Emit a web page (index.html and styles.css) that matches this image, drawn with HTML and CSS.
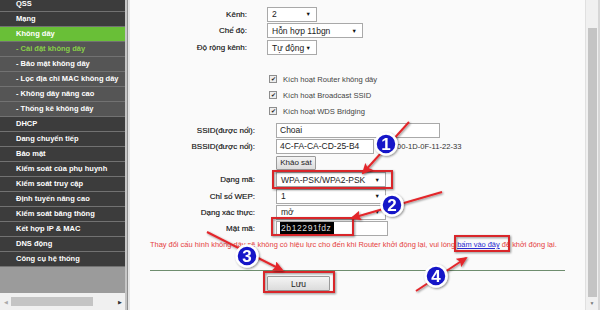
FILE: index.html
```html
<!DOCTYPE html>
<html lang="vi">
<head>
<meta charset="utf-8">
<title>Cài đặt không dây</title>
<link rel="stylesheet" href="styles.css">
</head>
<body>
<div class="page">
  <aside class="sidebar">
    <ul class="menu">
      <li>QSS</li>
      <li>Mạng</li>
      <li class="active">Không dây</li>
      <li class="sub current">- Cài đặt không dây</li>
      <li class="sub">- Bảo mật không dây</li>
      <li class="sub">- Lọc địa chỉ MAC không dây</li>
      <li class="sub">- Không dây nâng cao</li>
      <li class="sub">- Thống kê không dây</li>
      <li>DHCP</li>
      <li>Dang chuyển tiếp</li>
      <li>Bảo mật</li>
      <li>Kiểm soát của phụ huynh</li>
      <li>Kiểm soát truy cập</li>
      <li>Định tuyến nâng cao</li>
      <li>Kiểm soát băng thông</li>
      <li>Kết hợp IP &amp; MAC</li>
      <li>DNS động</li>
      <li>Công cụ hệ thống</li>
    </ul>
    <div class="side-fill"></div>
    <div class="hscroll">
      <span class="harrow left">◀</span>
      <span class="hthumb"></span>
      <span class="hspace"></span>
      <span class="harrow right">▶</span>
    </div>
  </aside>
  <div class="divider"></div>
  <main class="content">
    <div class="top">
      <div class="row"><span class="lab">Kênh:</span><div class="sel w50"><span>2</span><span class="arr">▼</span></div></div>
      <div class="row tall"><span class="lab">Chế độ:</span><div class="sel w96"><span>Hỗn hợp 11bgn</span><span class="arr">▼</span></div></div>
      <div class="row tall"><span class="lab">Độ rộng kênh:</span><div class="sel w50"><span>Tự động</span><span class="arr">▼</span></div></div>
    </div>
    <div class="checks">
      <div class="chk"><span class="box">✔</span><span>Kích hoạt Router không dây</span></div>
      <div class="chk"><span class="box">✔</span><span>Kích hoạt Broadcast SSID</span></div>
      <div class="chk"><span class="box">✔</span><span>Kích hoạt WDS Bridging</span></div>
    </div>
    <div class="sec">
      <div class="row"><span class="lab">SSID(được nối):</span><div class="inp w164">Choai</div></div>
      <div class="row"><span class="lab">BSSID(được nối):</span><div class="inp w98">4C-FA-CA-CD-25-B4</div><span class="hint">00-1D-0F-11-22-33</span></div>
      <div class="row tall"><span class="lab"></span><button class="btn small">Khảo sát</button></div>
      <div class="row tall"><span class="lab">Dạng mã:</span><div class="sel w110"><span>WPA-PSK/WPA2-PSK</span><span class="arr">▼</span></div></div>
      <div class="row"><span class="lab">Chỉ số WEP:</span><div class="sel w110"><span>1</span><span class="arr">▼</span></div></div>
      <div class="row"><span class="lab">Dạng xác thực:</span><div class="sel w110"><span>mở</span><span class="arr">▼</span></div></div>
      <div class="row"><span class="lab">Mật mã:</span><div class="inp w112"><span class="selected">2b12291fdz</span></div></div>
    </div>
    <p class="note">Thay đổi cấu hình không dây sẽ không có hiệu lực cho đến khi Router khởi động lại, vui lòng <a href="#">bấm vào đây</a> để khởi động lại.</p>
    <div class="rule"></div>
    <button class="btn save">Lưu</button>
  </main>
  <div class="vscroll">
    <span class="vthumb"></span>
    <span class="varrow">▼</span>
  </div>
</div>
<svg class="overlay" width="600" height="310" viewBox="0 0 600 310">
  <defs>
    <marker id="ah" markerUnits="userSpaceOnUse" markerWidth="11" markerHeight="10" refX="9" refY="5" orient="auto">
      <path d="M0,0 L11,5 L0,10 L2,5 z" fill="#e3262b"/>
    </marker>
    <filter id="sh" x="-20%" y="-20%" width="140%" height="140%">
      <feDropShadow dx="1" dy="1" stdDeviation="0.8" flood-color="#000" flood-opacity="0.45"/>
    </filter>
  </defs>
  <g fill="none" stroke="#d9262b" stroke-width="2" filter="url(#sh)">
    <rect x="273" y="171" width="119" height="17"/>
    <rect x="272" y="218" width="81" height="17"/>
    <rect x="455" y="236" width="54" height="15"/>
    <rect x="264" y="272" width="70" height="20"/>
  </g>
  <g stroke="#e3262b" stroke-width="2" marker-end="url(#ah)" filter="url(#sh)">
    <line x1="409" y1="122" x2="363" y2="173"/>
    <line x1="442" y1="192" x2="352" y2="218"/>
    <line x1="207" y1="232" x2="282" y2="270"/>
    <line x1="416" y1="291" x2="466" y2="258"/>
  </g>
  <g filter="url(#sh)" font-family="Liberation Sans, Arial, sans-serif" font-weight="bold" font-size="17" fill="#fff" text-anchor="middle">
    <circle cx="386" cy="144" r="10.5" fill="#1616c8" stroke="#fff" stroke-width="2.5"/>
    <text x="386" y="150">1</text>
    <circle cx="392" cy="205" r="10.5" fill="#1616c8" stroke="#fff" stroke-width="2.5"/>
    <text x="392" y="211">2</text>
    <circle cx="247" cy="256" r="10.5" fill="#1616c8" stroke="#fff" stroke-width="2.5"/>
    <text x="247" y="262">3</text>
    <circle cx="436" cy="276" r="10.5" fill="#1616c8" stroke="#fff" stroke-width="2.5"/>
    <text x="436" y="282">4</text>
  </g>
</svg>
</body>
</html>
```

FILE: styles.css
```css
* { box-sizing: border-box; }
html, body { margin: 0; padding: 0; }
body {
  width: 600px;
  height: 310px;
  overflow: hidden;
  position: relative;
  background: #fff;
  font-family: "Liberation Sans", Arial, sans-serif;
}
.page { display: flex; height: 310px; }

/* sidebar */
.sidebar {
  width: 125px;
  flex: none;
  display: flex;
  flex-direction: column;
  background: #9b9b9b;
  overflow: hidden;
}
.menu { list-style: none; margin: -3px 0 0; padding: 0; }
.menu li {
  height: 15px;
  line-height: 14px;
  border-bottom: 1px solid #727272;
  background: #3c3c3c;
  color: #fff;
  font-weight: bold;
  font-size: 7.5px;
  padding-left: 16px;
  white-space: nowrap;
}
.menu li.sub { background: #555; }
.menu li.active { background: #69bf37; }
.menu li.current { color: #88d048; }
.side-fill { flex: 1; }
.hscroll {
  height: 17px;
  background: #f0f0f0;
  display: flex;
  align-items: center;
}
.harrow { width: 11px; text-align: center; font-size: 5px; }
.harrow.left { color: #aaa; }
.harrow.right { color: #333; }
.hthumb { width: 82px; height: 9px; background: #c4c4c4; }
.hspace { flex: 1; }

.divider {
  width: 5px;
  flex: none;
  background: linear-gradient(to right, #c6c6c6 0 2px, #8f8f8f 2px 3px, #e6e6e6 3px 5px);
}

/* content */
.content {
  flex: 1;
  background: #fafafa;
  padding-top: 6px;
  font-size: 8px;
  color: #111;
}
.row { display: flex; align-items: center; height: 16px; }
.row.tall { height: 17px; }
.lab { flex: none; text-align: right; white-space: nowrap; -webkit-text-stroke: 0.15px #111; }
.top .lab { width: 117px; margin-right: 20px; }
.sec .lab { width: 125px; margin-right: 21px; }

.sel, .inp {
  height: 15px;
  border: 1px solid #a9a9a9;
  background: #fff;
  font-size: 8.5px;
  color: #222;
  display: flex;
  align-items: center;
  padding: 0 5px 0 4px;
  white-space: nowrap;
}
.sel { justify-content: space-between; }
.arr { font-size: 5.5px; color: #111; }
.w50 { width: 50px; }
.w96 { width: 96px; }
.w98 { width: 98px; }
.w110 { width: 110px; }
.w112 { width: 112px; }
.w164 { width: 164px; }
.inp { padding-left: 3px; }
.selected { background: #000; color: #ddd; padding: 0 3px 0 1px; line-height: 12px; letter-spacing: 0.6px; }
.hint { margin-left: 23px; font-size: 7.6px; color: #333; }

.checks { margin-top: 15px; }
.chk {
  display: flex;
  align-items: center;
  height: 16px;
  padding-left: 139px;
  color: #444;
  font-size: 7.6px;
}
.box {
  width: 8px;
  height: 8px;
  border: 1px solid #8d8d8d;
  background: #eee;
  font-size: 6px;
  line-height: 6px;
  text-align: center;
  color: #222;
  margin-right: 6px;
}
.sec { margin-top: 3px; }

.btn {
  font-family: "Liberation Sans", Arial, sans-serif;
  border: 1px solid #9a9a9a;
  background: linear-gradient(#f4f4f4, #dcdcdc);
  color: #222;
  padding: 0;
  border-radius: 1px;
}
.btn.small { width: 40px; height: 14px; font-size: 8px; }
.note {
  margin: 4px 0 0 20px;
  font-size: 7.45px;
  line-height: 10px;
  color: #e5403e;
  white-space: nowrap;
}
.note a { color: #2a2ad0; }
.rule { margin: 20px 0 0 20px; width: 415px; border-top: 1px solid #6e8d6e; }
.save { display: block; margin: 5px 0 0 137px; width: 63px; height: 15px; font-size: 8.5px; }

/* right scrollbar */
.vscroll {
  width: 15px;
  flex: none;
  background: #f0f0f0;
  border-left: 1px solid #e0e0e0;
  border-right: 2px solid #d6d6d6;
  padding-top: 28px;
  display: flex;
  flex-direction: column;
  align-items: center;
}
.vthumb { width: 9px; height: 269px; background: #c4c4c4; }
.varrow { font-size: 5px; color: #777; margin-top: 3px; }

.overlay { position: absolute; left: 0; top: 0; pointer-events: none; }
```
